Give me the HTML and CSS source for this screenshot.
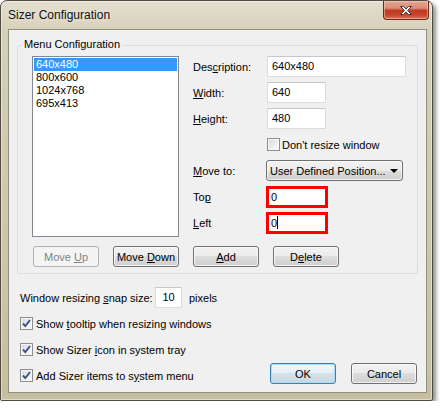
FILE: index.html
```html
<!DOCTYPE html>
<html lang="en">
<head>
    <meta charset="UTF-8">
    <title>Sizer Configuration</title>
    <link rel="stylesheet" href="styles.css">
</head>
<body>
    <div class="window">
        <div class="titlebar">
            <span class="title">Sizer Configuration</span>
            <button class="close">
                <svg width="14" height="11" viewBox="0 0 14 11">
                    <path d="M1.5 1.5h3l2.5 2.6 2.5-2.6h3l-4 4 4 4h-3l-2.5-2.6-2.5 2.6h-3l4-4z" fill="#fff" stroke="#3b3b3b" stroke-width="1" stroke-linejoin="round"/>
                </svg>
            </button>
        </div>

        <div class="client">
            <div class="group">
                <span class="legend">Menu Configuration</span>
                <div class="group-main">
                    <div class="listbox">
                        <div class="item selected">640x480</div>
                        <div class="item">800x600</div>
                        <div class="item">1024x768</div>
                        <div class="item">695x413</div>
                    </div>

                    <div class="fields">
                        <div class="field">
                            <label>Des<u>c</u>ription:</label>
                            <div class="text wide">640x480</div>
                        </div>
                        <div class="field">
                            <label><u>W</u>idth:</label>
                            <div class="text short">640</div>
                        </div>
                        <div class="field">
                            <label><u>H</u>eight:</label>
                            <div class="text short">480</div>
                        </div>
                        <div class="field check">
                            <span class="cb"></span>
                            <span>Don't resize window</span>
                        </div>
                        <div class="field">
                            <label><u>M</u>ove to:</label>
                            <div class="dropdown">
                                <span>User Defined Position...</span>
                                <span class="arrow"></span>
                            </div>
                        </div>
                        <div class="field">
                            <label>To<u>p</u></label>
                            <div class="text short flagged">0</div>
                        </div>
                        <div class="field">
                            <label><u>L</u>eft</label>
                            <div class="text short flagged">0<span class="caret"></span></div>
                        </div>
                    </div>
                </div>

                <div class="list-buttons">
                    <button class="btn" disabled>Move <u>U</u>p</button>
                    <button class="btn">Move <u>D</u>own</button>
                    <button class="btn"><u>A</u>dd</button>
                    <button class="btn">D<u>e</u>lete</button>
                </div>
            </div>

            <div class="snap-row">
                <label class="snap-label">Window resizing <u>s</u>nap size:</label>
                <div class="text snap">10</div>
                <span class="unit">pixels</span>
            </div>

            <div class="bottom">
                <div class="options">
                    <div class="opt">
                        <span class="cb checked">
                            <svg width="11" height="11" viewBox="0 0 11 11"><path d="M2 5.5l2.3 2.6L9 2.2" fill="none" stroke="#3d5288" stroke-width="1.9"/></svg>
                        </span>
                        <span>Show <u>t</u>ooltip when resizing windows</span>
                    </div>
                    <div class="opt">
                        <span class="cb checked">
                            <svg width="11" height="11" viewBox="0 0 11 11"><path d="M2 5.5l2.3 2.6L9 2.2" fill="none" stroke="#3d5288" stroke-width="1.9"/></svg>
                        </span>
                        <span>Show Sizer <u>i</u>con in system tray</span>
                    </div>
                    <div class="opt">
                        <span class="cb checked">
                            <svg width="11" height="11" viewBox="0 0 11 11"><path d="M2 5.5l2.3 2.6L9 2.2" fill="none" stroke="#3d5288" stroke-width="1.9"/></svg>
                        </span>
                        <span>Add Sizer items to s<u>y</u>stem menu</span>
                    </div>
                </div>
                <div class="dialog-buttons">
                    <button class="btn default">OK</button>
                    <button class="btn">Cancel</button>
                </div>
            </div>
        </div>
    </div>
</body>
</html>
```

FILE: styles.css
```css
* {
    box-sizing: border-box;
}
body {
    margin: 0;
    background: #fff;
    font: 11px "Liberation Sans", Arial, sans-serif;
    color: #000;
}
u {
    text-decoration: underline;
}

/* window frame */
.window {
    width: 433px;
    height: 401px;
    border: 1px solid #4f4c42;
    border-radius: 7px 7px 2px 2px;
    background: linear-gradient(180deg, #e3dece 0%, #d6cfb9 8%, #cdc6aa 60%, #c6be9f 100%);
    box-shadow: 3px 3px 4px rgba(0, 0, 0, 0.45), inset 0 0 0 1px rgba(255, 255, 255, 0.45);
    display: flex;
    flex-direction: column;
}
.titlebar {
    height: 28px;
    display: flex;
    justify-content: space-between;
    align-items: flex-start;
    padding-left: 7px;
}
.title {
    font-size: 12px;
    line-height: 28px;
    color: #111;
    text-shadow: 0 0 6px rgba(255, 255, 255, 0.9);
}
.close {
    width: 46px;
    height: 19px;
    margin-right: 3px;
    padding: 0;
    border: 1px solid #6a2a20;
    border-top: none;
    border-radius: 0 0 4px 4px;
    background: linear-gradient(180deg, #e6a796 0%, #d98a76 40%, #c33a25 52%, #c8442c 78%, #dc7a5c 100%);
    box-shadow: inset 0 0 0 1px rgba(255, 210, 190, 0.5);
    display: flex;
    align-items: center;
    justify-content: center;
}

/* client area */
.client {
    margin-left: 7px;
    width: 419px;
    height: 364px;
    border: 1px solid #938f80;
    background: #f0f0f0;
}

/* group box */
.group {
    position: relative;
    margin: 15px 0 0 8px;
    width: 401px;
    height: 229px;
    border: 1px solid #d5dfe5;
    border-radius: 3px;
    padding: 10px 0 0 14px;
}
.legend {
    position: absolute;
    top: -9px;
    left: 4px;
    padding: 0 2px;
    line-height: 14px;
    background: #f0f0f0;
}
.group-main {
    display: flex;
    gap: 14px;
}
.listbox {
    width: 147px;
    height: 181px;
    border: 1px solid #828790;
    background: #fff;
    padding: 1px;
}
.item {
    height: 13px;
    line-height: 13px;
    padding-left: 2px;
}
.item.selected {
    background: #3399ff;
    color: #fff;
}

.fields {
    display: flex;
    flex-direction: column;
    gap: 5px;
}
.field {
    display: flex;
    align-items: center;
    height: 21px;
}
.field label {
    width: 74px;
}
.field.check {
    padding-left: 74px;
    gap: 2px;
}

/* edit boxes */
.text {
    height: 21px;
    border: 1px solid #dadde3;
    border-top-color: #c4c7cd;
    background: #fff;
    padding: 0 4px;
    line-height: 19px;
}
.text.wide {
    width: 139px;
}
.text.short {
    width: 59px;
}
.text.flagged {
    width: 62px;
    height: 22px;
    margin-left: -1px;
    border: 3px solid #ff0000;
    padding: 0 2px;
    line-height: 16px;
}
.caret {
    display: inline-block;
    width: 1px;
    height: 13px;
    background: #000;
    vertical-align: -2px;
}

.dropdown {
    width: 137px;
    height: 21px;
    margin-left: -1px;
    border: 1px solid #707070;
    border-radius: 3px;
    background: linear-gradient(180deg, #f2f2f2 0%, #ebebeb 50%, #dddddd 50%, #cfcfcf 100%);
    box-shadow: inset 0 0 0 1px rgba(255, 255, 255, 0.7);
    display: flex;
    align-items: center;
    justify-content: space-between;
    padding: 0 4px 0 3px;
}
.arrow {
    width: 0;
    height: 0;
    border-left: 4px solid transparent;
    border-right: 4px solid transparent;
    border-top: 4px solid #000;
}

/* check boxes */
.cb {
    width: 13px;
    height: 13px;
    border: 1px solid #8e8f8f;
    background: linear-gradient(135deg, #d4d6d9 0%, #f1f1f1 60%, #fbfbfb 100%);
    box-shadow: inset 0 0 0 1px #f6f6f6;
    display: flex;
    align-items: center;
    justify-content: center;
    flex-shrink: 0;
}

/* push buttons */
.btn {
    width: 66px;
    height: 21px;
    padding: 0;
    border: 1px solid #707070;
    border-radius: 3px;
    background: linear-gradient(180deg, #f2f2f2 0%, #ebebeb 50%, #dddddd 50%, #cfcfcf 100%);
    box-shadow: inset 0 0 0 1px rgba(255, 255, 255, 0.7);
    font: inherit;
    color: #000;
}
.btn:disabled {
    border-color: #adb2b5;
    background: #f4f4f4;
    box-shadow: none;
    color: #838383;
}
.btn.default {
    border-color: #3c7fb1;
    box-shadow: inset 0 0 0 1px #a9dcf6;
    background: linear-gradient(180deg, #f0f7fb 0%, #e6eff5 50%, #d6e2ea 50%, #c9d7e0 100%);
}
.list-buttons {
    display: flex;
    gap: 14px;
    margin: 9px 0 0 1px;
}

/* lower options */
.snap-row {
    display: flex;
    align-items: center;
    height: 21px;
    margin-top: 13px;
    padding-left: 11px;
}
.snap-label {
    width: 135px;
}
.text.snap {
    width: 27px;
    text-align: center;
}
.unit {
    margin-left: 7px;
}

.bottom {
    display: flex;
    justify-content: space-between;
    padding: 0 9px 0 11px;
    margin-top: 5px;
}
.options {
    display: flex;
    flex-direction: column;
    gap: 5px;
}
.opt {
    display: flex;
    align-items: center;
    gap: 3px;
    height: 21px;
}
.dialog-buttons {
    display: flex;
    gap: 15px;
    align-self: flex-end;
    margin-bottom: 2px;
}
```
